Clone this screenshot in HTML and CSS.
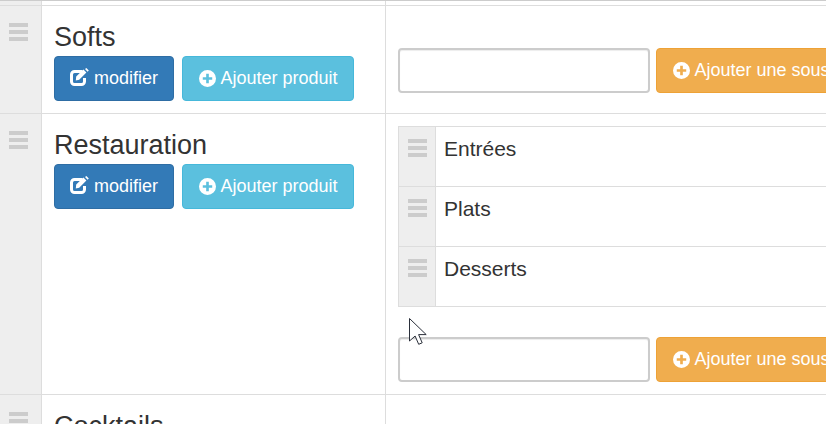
FILE: index.html
```html
<!DOCTYPE html>
<html lang="fr">
<head>
  <meta charset="UTF-8" />
  <meta name="viewport" content="width=device-width, initial-scale=1.0"/>
  <title>Catégories</title>
  <link rel="stylesheet" href="styles.css">
</head>
<body>

  <svg class="defs" width="0" height="0">
    <symbol id="plus-circle" viewBox="0 0 18 18">
      <path fill-rule="evenodd" d="M9 0a9 9 0 1 1 0 18A9 9 0 0 1 9 0zM7.6 4v3.6H4v2.8h3.6V14h2.8v-3.6H14V7.6h-3.6V4z"/>
    </symbol>
    <symbol id="edit" viewBox="0 0 20 18">
      <path fill="none" stroke="currentColor" stroke-width="3" d="M12.5 3.5H4.5a3 3 0 0 0-3 3v7a3 3 0 0 0 3 3h7a3 3 0 0 0 3-3V10"/>
      <path fill="currentColor" d="M6.2 8.6L13.4 1.6l3 3-7.2 7.2-3.4.6zM15 1L16.4 0l2.4 2.4-1.2 1.4z"/>
    </symbol>
  </svg>

  <div class="table">
    <div class="row row-prev">
      <div class="handle"></div>
      <div class="cell-name"></div>
      <div class="cell-subs"></div>
    </div>

    <div class="row">
      <div class="handle"><div class="bars"><i></i><i></i><i></i></div></div>
      <div class="cell-name">
        <h3>Softs</h3>
        <div class="actions">
          <a class="btn btn-primary"><svg class="icon icon-edit"><use href="#edit"/></svg>modifier</a>
          <a class="btn btn-info"><svg class="icon"><use href="#plus-circle"/></svg>Ajouter produit</a>
        </div>
      </div>
      <div class="cell-subs">
        <form class="add-form">
          <input type="text" class="field">
          <a class="btn btn-warning"><svg class="icon"><use href="#plus-circle"/></svg>Ajouter une sous-catégorie</a>
        </form>
      </div>
    </div>

    <div class="row">
      <div class="handle"><div class="bars"><i></i><i></i><i></i></div></div>
      <div class="cell-name">
        <h3>Restauration</h3>
        <div class="actions">
          <a class="btn btn-primary"><svg class="icon icon-edit"><use href="#edit"/></svg>modifier</a>
          <a class="btn btn-info"><svg class="icon"><use href="#plus-circle"/></svg>Ajouter produit</a>
        </div>
      </div>
      <div class="cell-subs">
        <ul class="sub-list">
          <li><div class="sub-handle"><div class="bars"><i></i><i></i><i></i></div></div><span class="sub-name">Entrées</span></li>
          <li><div class="sub-handle"><div class="bars"><i></i><i></i><i></i></div></div><span class="sub-name">Plats</span></li>
          <li><div class="sub-handle"><div class="bars"><i></i><i></i><i></i></div></div><span class="sub-name">Desserts</span></li>
        </ul>
        <form class="add-form">
          <input type="text" class="field">
          <a class="btn btn-warning"><svg class="icon"><use href="#plus-circle"/></svg>Ajouter une sous-catégorie</a>
        </form>
      </div>
    </div>

    <div class="row">
      <div class="handle"><div class="bars"><i></i><i></i><i></i></div></div>
      <div class="cell-name">
        <h3>Cocktails</h3>
      </div>
      <div class="cell-subs"></div>
    </div>
  </div>

  <!-- mouse pointer caught in the screenshot -->
  <svg class="cursor" width="20" height="29" viewBox="0 0 20 29">
    <path d="M.5.5v22.5l5.6-5 3.6 8.3 3.5-1.5-3.6-8.2h7.6z" fill="#fff" stroke="#2a2f3a" stroke-width="1"/>
  </svg>

</body>
</html>
```

FILE: styles.css
```css
* { margin: 0; padding: 0; box-sizing: border-box; }

html, body {
  height: 424px;
  overflow: hidden;
}

body {
  font-family: 'Liberation Sans', Arial, sans-serif;
  color: #333;
  background: #fff;
  position: relative;
}

.defs {
  position: absolute;
}

.table {
  border-top: 1px solid #ccc;
}

.row {
  display: flex;
  border-top: 1px solid #ddd;
}

.row-prev {
  height: 4px;
  border-top: none;
}

.handle {
  flex: none;
  width: 42px;
  background: #eee;
  border-right: 1px solid #ddd;
  padding: 17px 0 0 9px;
}

.row-prev .handle {
  padding: 0;
}

.bars {
  width: 19px;
  display: flex;
  flex-direction: column;
  gap: 3px;
}

.bars i {
  display: block;
  height: 4px;
  background: #ccc;
}

.cell-name {
  flex: none;
  width: 344px;
  border-right: 1px solid #ddd;
  padding: 12px;
}

.cell-subs {
  flex: 1;
  min-width: 0;
  padding: 12px 0 12px 12px;
  overflow: hidden;
}

h3 {
  font-size: 27px;
  font-weight: 400;
  line-height: 30px;
  margin: 4px 0 4px;
}

.actions {
  display: flex;
  gap: 8px;
}

.btn {
  display: inline-flex;
  align-items: center;
  height: 45px;
  padding: 0 15px;
  font-size: 18px;
  color: #fff;
  white-space: nowrap;
  border: 1px solid transparent;
  border-radius: 4px;
}

.btn-primary {
  background: #337ab7;
  border-color: #2e6da4;
}

.btn-info {
  background: #5bc0de;
  border-color: #46b8da;
}

.btn-warning {
  background: #f0ad4e;
  border-color: #eea236;
  flex: none;
}

.icon {
  width: 17px;
  height: 17px;
  margin: 0 4.5px 0 1px;
  fill: #fff;
  flex: none;
}

.icon-edit {
  width: 20px;
  height: 18px;
  margin: -3px 4px 0 0;
}

.add-form {
  display: flex;
  gap: 6px;
  margin-top: 30px;
}

.field {
  flex: none;
  width: 252px;
  height: 45px;
  border: 2px solid #ccc;
  border-radius: 4px;
  background: #fff;
  box-shadow: inset 0 1px 1px rgba(0, 0, 0, 0.075);
}

.sub-list {
  list-style: none;
  border: 1px solid #ddd;
  border-right: none;
  border-bottom: none;
}

.sub-list li {
  display: flex;
  height: 60px;
  border-bottom: 1px solid #ddd;
}

.sub-handle {
  flex: none;
  width: 37px;
  background: #eee;
  border-right: 1px solid #ddd;
  padding: 12px 0 0 9px;
}

.sub-name {
  font-size: 21px;
  line-height: 24px;
  padding: 10px 0 0 8px;
}

.cursor {
  position: absolute;
  left: 409px;
  top: 318px;
}
```
